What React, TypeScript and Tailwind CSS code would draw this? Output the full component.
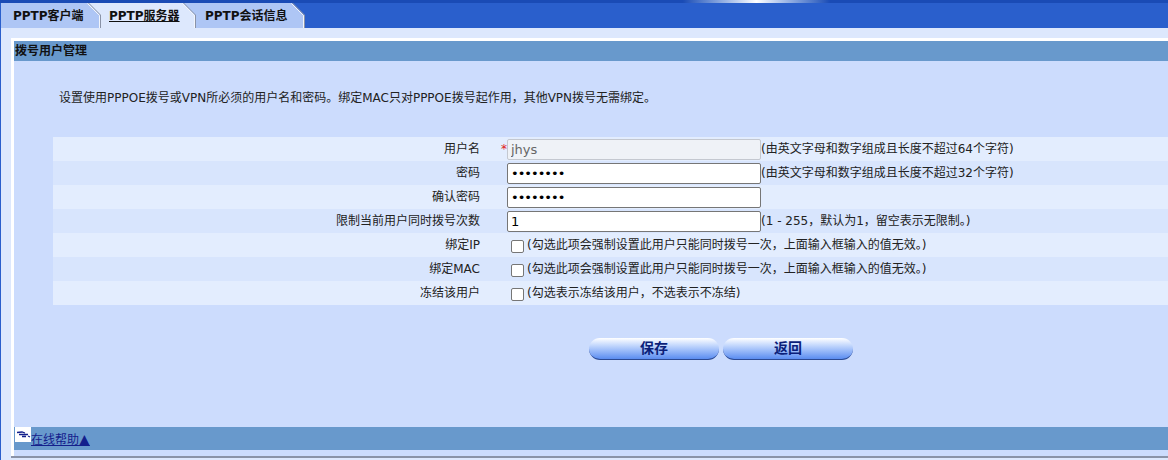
const rows = [
  { label: '用户名', star: true, value: 'jhys', disabled: true, note: '(由英文字母和数字组成且长度不超过64个字符)' },
  { label: '密码', value: '12345678', password: true, note: '(由英文字母和数字组成且长度不超过32个字符)' },
  { label: '确认密码', value: '12345678', password: true, note: '' },
  { label: '限制当前用户同时拨号次数', value: '1', note: '(1 - 255，默认为1，留空表示无限制。)' },
  { label: '绑定IP', check: true, note: '(勾选此项会强制设置此用户只能同时拨号一次，上面输入框输入的值无效。)' },
  { label: '绑定MAC', check: true, note: '(勾选此项会强制设置此用户只能同时拨号一次，上面输入框输入的值无效。)' },
  { label: '冻结该用户', check: true, note: '(勾选表示冻结该用户，不选表示不冻结)' },
];

const tabs = [
  { name: 'PPTP客户端', width: 'w-[100px]', pad: 'pl-[12px]', behind: 'bg-[#dde8fd]' },
  { name: 'PPTP服务器', width: 'w-[95px]', pad: 'pl-[8px]', behind: 'bg-[#aec6f5]', active: true },
  { name: 'PPTP会话信息', width: 'w-[109px]', pad: 'pl-[9px]', behind: 'bg-[#2a5fcc]' },
];

function Tab({ name, width, pad, behind, active }: { name: string; width: string; pad: string; behind: string; active?: boolean }) {
  return (
    <div className={`relative h-[25px] ${width} ${behind}`}>
      <div className={`h-full ${pad} ${active ? 'bg-[#dde8fd]' : 'bg-[#aec6f5]'} [clip-path:polygon(0_0,calc(100%-13px)_0,100%_13px,100%_100%,0_100%)] flex items-center text-[12px] font-bold text-[#111]`}>
        <span className={active ? 'underline' : ''}>{name}</span>
      </div>
      <svg className="absolute right-0 top-0" width="14" height="25" viewBox="0 0 14 25">
        <path d="M0.5 0.5 L12.5 12.5 L12.5 25" stroke="#f2f5fb" fill="none" />
        <path d="M1.5 0 L13.5 12 L13.5 25" stroke="#8a93a8" fill="none" />
      </svg>
    </div>
  );
}

function App() {
  return (
    <div className="w-[1168px] h-[460px] overflow-hidden bg-[#dde8fd] text-[12px] text-[#222] font-['DejaVu_Sans','Noto_Sans_CJK_SC',sans-serif]">
      <div className="relative h-[3px] bg-[#1a4bb5]">
        <div className="absolute left-[683px] top-0 h-[3px] w-[147px] bg-gradient-to-r from-[#1a4bb5] via-white to-[#1a4bb5]" />
      </div>
      <div className="flex h-[25px] bg-[#2a5fcc] pl-[1px]">
        {tabs.map((t) => (
          <Tab key={t.name} {...t} />
        ))}
      </div>
      <div className="border-l border-[#2a5fcc] h-[432px] pl-[10px] pt-[10px]">
        <div className="border-t-[3px] border-l-[3px] border-white h-[420px] bg-[#ccdcfd] flex flex-col">
          <div className="h-[20px] shrink-0 bg-[#6899cc] font-bold text-[#111] leading-[20px] pl-[1px]">拨号用户管理</div>
          <p className="mt-[29px] ml-[45px] leading-[17px]">设置使用PPPOE拨号或VPN所必须的用户名和密码。绑定MAC只对PPPOE拨号起作用，其他VPN拨号无需绑定。</p>
          <div className="mt-[30px] ml-[39px] flex flex-col">
            {rows.map((r, i) => (
              <div key={r.label} className={`flex items-center h-[24px] ${i % 2 === 0 ? 'bg-[#e3edfe]' : 'bg-[#d8e5fd]'}`}>
                <div className="w-[427px] shrink-0 text-right">{r.label}</div>
                <div className="w-[27px] shrink-0 text-right text-[#e02020] leading-[12px]">{r.star ? '*' : ''}</div>
                {r.check ? (
                  <div className="w-[16px] ml-[4px] shrink-0 flex">
                    <input type="checkbox" className="appearance-none w-[13px] h-[13px] rounded-[2px] border border-[#767676] bg-white mt-[2px]" />
                  </div>
                ) : (
                  <input
                    readOnly
                    type={r.password ? 'password' : 'text'}
                    value={r.value}
                    className={`w-[254px] h-[21px] shrink-0 px-[3px] rounded-[2px] border text-[13px] ${r.password ? 'tracking-[-1px]' : ''} ${r.disabled ? 'bg-[#eff2f7] border-[#c4c8d0] text-[#666]' : 'bg-white border-[#767676] text-black'}`}
                  />
                )}
                <div className="whitespace-nowrap">{r.note}</div>
              </div>
            ))}
          </div>
          <div className="mt-[33px] ml-[575px] flex gap-[4px]">
            <button className="w-[130px] h-[22px] rounded-[11px] bg-gradient-to-b from-white to-[#5b8cf0] border-b border-[#2c4a94] text-[14px] font-bold text-[#0b1f7a]">保存</button>
            <button className="w-[130px] h-[22px] rounded-[11px] bg-gradient-to-b from-white to-[#5b8cf0] border-b border-[#2c4a94] text-[14px] font-bold text-[#0b1f7a]">返回</button>
          </div>
          <div className="mt-[67px] h-[23px] shrink-0 bg-[#6899cc] flex items-end">
            <div className="w-[16px] h-[15px] ml-[1px] bg-white self-start flex items-start justify-center pt-[4px]">
              <svg width="15" height="8" viewBox="0 0 15 8">
                <path d="M1 1.5 L6 1 L9 2 M3 3.5 L12 3.5 M6 5.5 L10 5.5 M12 5 L14 6" stroke="#14208c" strokeWidth="1.3" fill="none" />
              </svg>
            </div>
            <a className="underline text-[#14208c] leading-[20px]">在线帮助<span className="text-[14px] leading-[14px]">▲</span></a>
          </div>
          <div className="mt-[6px] border-b-2 border-[#8a93a8] -ml-[3px]" />
        </div>
      </div>
    </div>
  );
}

export default App;
